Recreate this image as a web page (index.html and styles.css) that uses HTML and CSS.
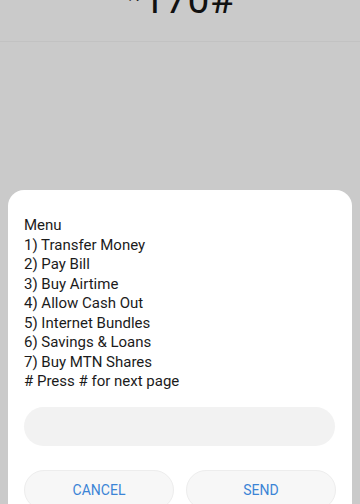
FILE: index.html
```html
<!DOCTYPE html>
<html>
<head>
<meta charset="utf-8">
<link rel="stylesheet" href="styles.css">
</head>
<body>
<div class="screen">
  <div class="header"><div class="code">*170#</div></div>
  <div class="dialog">
    <div class="message">
      <div>Menu</div>
      <div>1) Transfer Money</div>
      <div>2) Pay Bill</div>
      <div>3) Buy Airtime</div>
      <div>4) Allow Cash Out</div>
      <div>5) Internet Bundles</div>
      <div>6) Savings &amp; Loans</div>
      <div>7) Buy MTN Shares</div>
      <div># Press # for next page</div>
    </div>
    <div class="input"></div>
    <div class="buttons">
      <div class="btn">CANCEL</div>
      <div class="btn">SEND</div>
    </div>
  </div>
</div>
</body>
</html>
```
FILE: styles.css
```css
html, body {
  margin: 0;
  padding: 0;
}
body {
  background: #cacaca;
  font-family: Roboto, "Noto Sans", sans-serif;
}
.screen {
  width: 360px;
  height: 504px;
  overflow: hidden;
  display: flex;
  flex-direction: column;
}
.header {
  height: 42px;
  flex: none;
  border-bottom: 1px solid #c2c2c2;
  box-sizing: border-box;
  display: flex;
  justify-content: center;
}
.code {
  font-size: 39px;
  line-height: 1;
  margin-top: -19px;
  color: #111;
  letter-spacing: 0.5px;
}
.dialog {
  flex: none;
  margin: 148px 8px 0 8px;
  background: #ffffff;
  border-radius: 16px;
  padding: 26px 16px 20px 16px;
  display: flex;
  flex-direction: column;
}
.message {
  font-size: 15px;
  line-height: 19.5px;
  color: #1b1b1b;
}
.input {
  margin-top: 15px;
  height: 39px;
  border-radius: 20px;
  background: #f2f2f2;
  margin-right: 1px;
}
.buttons {
  margin-top: 24px;
  display: flex;
  gap: 12px;
}
.btn {
  flex: 1;
  height: 40px;
  border-radius: 20px;
  background: #f7f7f7;
  border: 1px solid #ededed;
  box-sizing: border-box;
  display: flex;
  align-items: center;
  justify-content: center;
  color: #3b84d6;
  font-size: 14px;
}
```
